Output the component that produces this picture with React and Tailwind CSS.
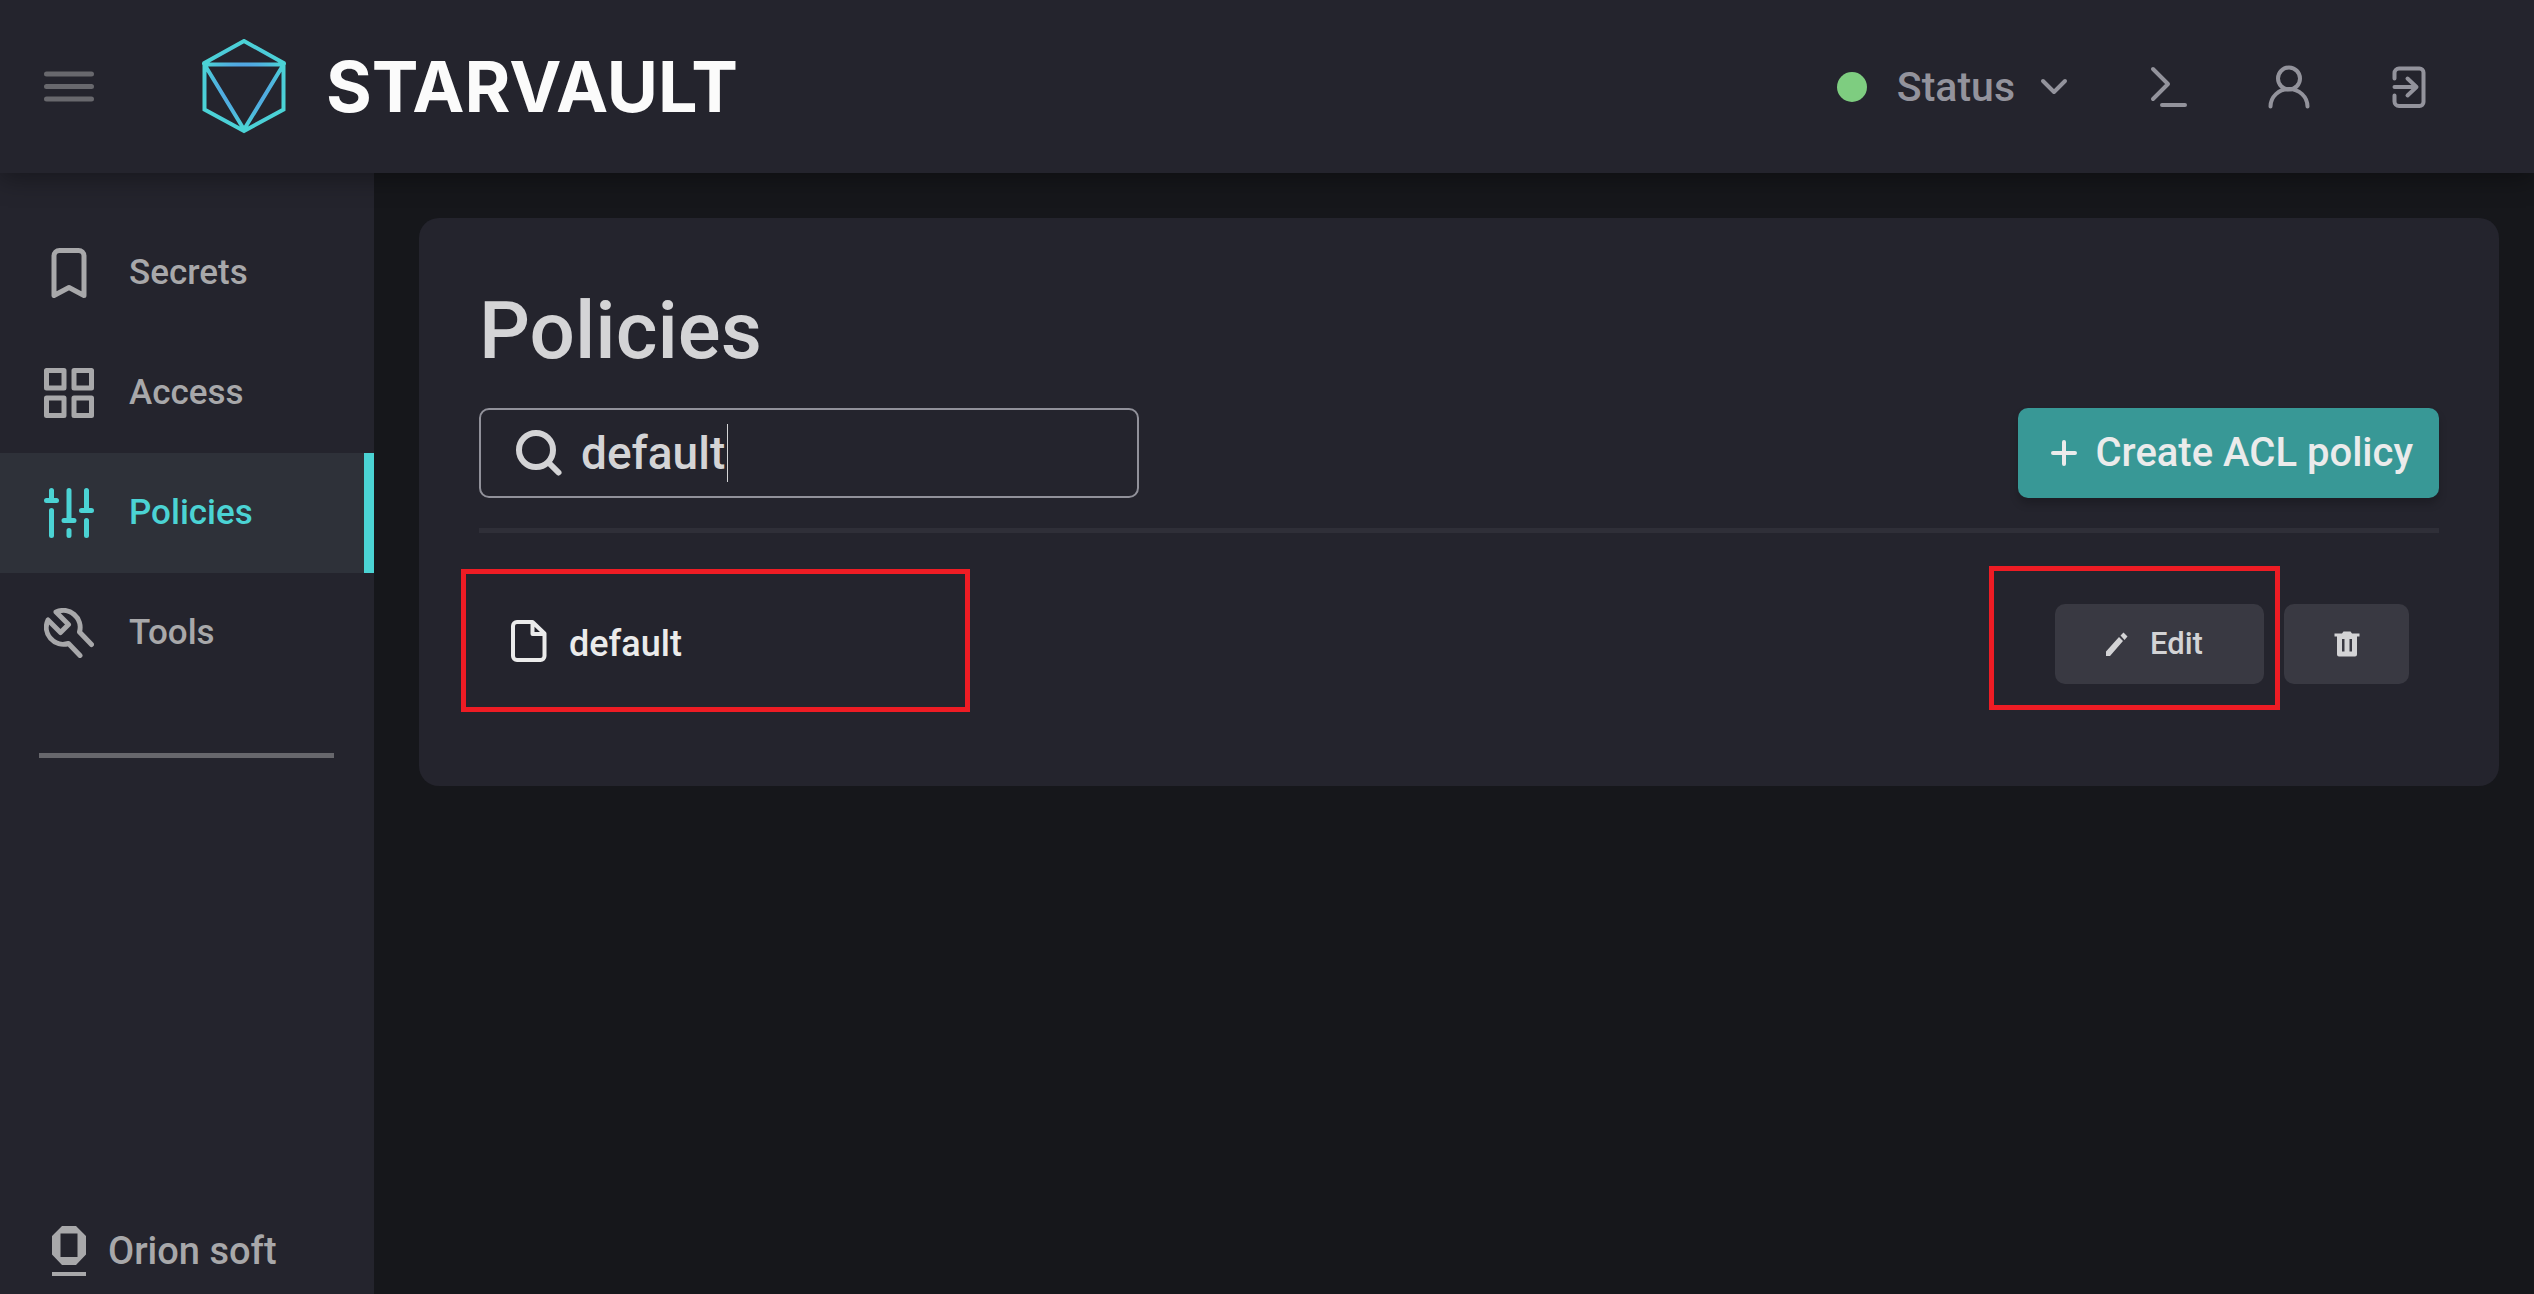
import { useState } from 'react'

const NAV_ITEMS = [
  { id: 'secrets', label: 'Secrets', Icon: BookmarkIcon },
  { id: 'access', label: 'Access', Icon: GridIcon },
  { id: 'policies', label: 'Policies', Icon: SlidersIcon },
  { id: 'tools', label: 'Tools', Icon: WrenchIcon },
]

const POLICIES = ['default']

function StrokeIcon({ box, width, className, children }) {
  return (
    <svg
      viewBox={`0 0 ${box} ${box}`}
      className={className}
      fill="none"
      stroke="currentColor"
      strokeWidth={width}
      strokeLinecap="round"
      strokeLinejoin="round"
      aria-hidden
    >
      {children}
    </svg>
  )
}

function NavIcon({ children }) {
  return <StrokeIcon box={50} width={5} className="w-[50px] h-[50px] shrink-0">{children}</StrokeIcon>
}

function HeaderIcon({ children }) {
  return <StrokeIcon box={60} width={4} className="w-15 h-15">{children}</StrokeIcon>
}

function BookmarkIcon() {
  return <NavIcon><path d="M10 47.5V8a5.5 5.5 0 0 1 5.5-5.5h19A5.5 5.5 0 0 1 40 8v39.5L25 39.5z" /></NavIcon>
}

function GridIcon() {
  return (
    <NavIcon>
      <path d="M2.5 2.5H20V20H2.5zM30 2.5h17.5V20H30zM2.5 30H20v17.5H2.5zM30 30h17.5v17.5H30z" />
    </NavIcon>
  )
}

function SlidersIcon() {
  return (
    <NavIcon>
      <path d="M7.5 2.5v10M2.5 12.5h10M7.5 22.5v25M25 2.5v30M20 32.5h10M25 42.5v5M42.5 2.5v20M37.5 22.5h10M42.5 32.5v15" />
    </NavIcon>
  )
}

function WrenchIcon() {
  return (
    <NavIcon>
      <path d="M47.5 36.5l-12-12.5A17 17 0 0 0 12 4l12.5 12.5-8 8L4 12a17 17 0 0 0 20.5 23.5l11.5 12" />
    </NavIcon>
  )
}

function LogoMark() {
  return (
    <svg viewBox="0 0 84 96" className="w-[84px] h-24" fill="none" strokeWidth="4" aria-hidden>
      <defs>
        <radialGradient id="mark" gradientUnits="userSpaceOnUse" cx="42" cy="46" r="46">
          <stop offset="0.3" stopColor="#5399e6" />
          <stop offset="0.92" stopColor="#4bd3d6" />
        </radialGradient>
      </defs>
      <path stroke="url(#mark)" d="M42 2l39.5 22v46.5L42 92 2.5 70.5V24zM2.5 25.5h79L42 90.5z" />
    </svg>
  )
}

function OrionMark() {
  return (
    <svg viewBox="0 0 34 50" className="w-[34px] h-[50px]" fill="currentColor" aria-hidden>
      <path fillRule="evenodd" d="M10 0h14l10 10v18.5L24 39H10L0 28.5V10zM8.5 7.5V31h17V7.5z" />
      <path d="M0 46h34v4H0z" />
    </svg>
  )
}

function Header() {
  return (
    <header className="relative z-10 flex items-center h-[173px] pl-11 pr-[95px] bg-[#24242d] shadow-[0_6px_24px_rgba(0,0,0,0.35)]">
      <button type="button" aria-label="Toggle menu" className="text-[#68686d]">
        <StrokeIcon box={50} width={5} className="w-[50px] h-[50px]">
          <path d="M2.5 12h45M2.5 24.5h45M2.5 37h45" />
        </StrokeIcon>
      </button>
      <a href="#home" className="flex items-center gap-10 ml-[108px] text-[#fbfbfb]">
        <LogoMark />
        <span className="font-['Inter',sans-serif] font-bold text-[70px] leading-none">STARVAULT</span>
      </a>

      <div className="flex items-center ml-auto text-[#93939c]">
        <button type="button" className="flex items-center mr-[70px]">
          <span className="w-[30px] h-[30px] rounded-full bg-[#7ecd80]" />
          <span className="ml-[30px] text-[41px] leading-12 font-medium">Status</span>
          <svg viewBox="0 0 30 20" className="w-[30px] h-5 ml-6" fill="none" stroke="currentColor" strokeWidth="4" strokeLinecap="round" strokeLinejoin="round" aria-hidden>
            <path d="M4 4l11 11L26 4" />
          </svg>
        </button>
        <div className="flex gap-15">
          <button type="button" aria-label="Console">
            <HeaderIcon><path d="M14 12l15 15-15 15M23 48h23" /></HeaderIcon>
          </button>
          <button type="button" aria-label="Account">
            <HeaderIcon>
              <circle cx="30" cy="21.5" r="11" />
              <path d="M11.5 49.5a18.5 17.5 0 0 1 37 0" />
            </HeaderIcon>
          </button>
          <button type="button" aria-label="Log out">
            <HeaderIcon>
              <path d="M15.5 21.5V16a4.5 4.5 0 0 1 4.5-4.5h20.5a4 4 0 0 1 4 4V45a4 4 0 0 1-4 4H20a4.5 4.5 0 0 1-4.5-4.5V38.5M15.5 30H37M28.5 21.5L37.5 30l-9 8.5" />
            </HeaderIcon>
          </button>
        </div>
      </div>
    </header>
  )
}

function Sidebar({ active, onSelect }) {
  return (
    <aside className="flex flex-col w-[374px] shrink-0 pt-10 bg-[#24242d] text-[#a8a8aa]">
      <nav>
        {NAV_ITEMS.map(({ id, label, Icon }) => (
          <a
            key={id}
            href={`#${id}`}
            onClick={() => onSelect(id)}
            className={`flex items-center gap-[35px] h-30 pl-11 text-[35px] font-medium border-r-10 ${
              id === active ? 'bg-[#2e3139] border-[#4bd3d4] text-[#4bd3d4]' : 'border-transparent'
            }`}
          >
            <Icon />
            {label}
          </a>
        ))}
      </nav>
      <hr className="mt-15 ml-[39px] mr-10 border-t-5 border-[#67676c]" />
      <a href="#orion" className="flex items-center gap-[22px] mt-auto mb-[18px] pl-[52px] text-[38px] leading-[50px] font-medium">
        <OrionMark />
        Orion soft
      </a>
    </aside>
  )
}

function PolicyRow({ name }) {
  return (
    <li className="flex items-center justify-between h-20 pl-8 pr-[30px]">
      <div className="relative">
        <a href={`#policy-${name}`} className="flex items-center gap-[22px] text-[36px] leading-12 font-medium text-[#ebebeb]">
          <svg viewBox="0 0 36 48" className="w-9 h-12" fill="none" stroke="currentColor" strokeWidth="4" strokeLinejoin="round" aria-hidden>
            <path d="M6 2h15.5L33.5 13.5V36a4 4 0 0 1-4 4H6a4 4 0 0 1-4-4V6a4 4 0 0 1 4-4zM21.5 2v12H33" />
          </svg>
          {name}
        </a>
        {/* highlight */}
        <span className="absolute -left-[50px] -top-[51px] w-[509px] h-[143px] border-5 border-[#ee1c24] pointer-events-none" />
      </div>
      <div className="flex gap-5 text-[#d3d3d5]">
        <div className="relative">
          <button type="button" className="flex items-center gap-[22px] w-[209px] h-20 pl-[51px] rounded-[10px] bg-[#393942] text-[31px] font-medium">
            <svg viewBox="0 0 22 24" className="w-[22px] h-6" fill="currentColor" aria-hidden>
              <path d="M0 24v-4.5L13 5l4 4L4 24zM14.5 3.5L17.5 0.5l4 4-3 3.5z" />
            </svg>
            Edit
          </button>
          <span className="absolute -left-[66px] -top-[38px] w-[291px] h-36 border-5 border-[#ee1c24] pointer-events-none" />
        </div>
        <button type="button" aria-label="Delete" className="flex items-center justify-center w-[125px] h-20 rounded-[10px] bg-[#393942]">
          <svg viewBox="0 0 26 26" className="w-[26px] h-[26px]" fill="currentColor" aria-hidden>
            <path fillRule="evenodd" d="M0.5 2.5H8L9.5 0.5h7L18 2.5h7.5V5.5H23V23.5a2 2 0 0 1-2 2H5a2 2 0 0 1-2-2V5.5H0.5zM8 8v12.5h2.5V8zM15.5 8v12.5H18V8z" />
          </svg>
        </button>
      </div>
    </li>
  )
}

export default function App() {
  const [section, setSection] = useState('policies')
  const [filter, setFilter] = useState('default')
  const visible = POLICIES.filter(name => name.includes(filter))

  return (
    <div className="flex flex-col min-h-screen bg-[#16171b] font-['Roboto',sans-serif]">
      <Header />
      <div className="flex grow">
        <Sidebar active={section} onSelect={setSection} />
        <main className="grow pt-[45px] pl-[45px] pr-[35px]">
          <section className="px-15 pt-[73px] pb-[102px] rounded-[20px] bg-[#24242d]">
            <h1 className="text-[80px] leading-20 font-medium text-[#d4d4d6]">Policies</h1>
            <div className="flex items-center justify-between mt-[37px]">
              <label className="relative flex items-center gap-[18px] w-[660px] h-[90px] pl-[34px] border-2 border-[#91919a] rounded-[10px] text-[#d4d4d6]">
                <StrokeIcon box={48} width={6} className="w-12 h-12 shrink-0">
                  <circle cx="21" cy="21" r="17" />
                  <path d="M33.5 33.5l10 10" />
                </StrokeIcon>
                <input
                  aria-label="Filter policies"
                  value={filter}
                  onChange={e => setFilter(e.target.value)}
                  className="grow min-w-0 text-[46px] leading-[58px] font-medium outline-none"
                />
                <span className="absolute left-[246px] w-px h-[58px] bg-[#d4d4d6]" />
              </label>
              <button type="button" className="flex items-center gap-[18px] h-[90px] pl-8 pr-[26px] rounded-[10px] bg-[#389896] text-[#ebebeb] text-[40px] font-medium shadow-[0_6px_8px_rgba(0,0,0,0.2)]">
                <StrokeIcon box={28} width={4} className="w-7 h-7">
                  <path d="M14 3v22M3 14h22" />
                </StrokeIcon>
                Create ACL policy
              </button>
            </div>
            <hr className="mt-[30px] border-t-5 border-[#2f2f38]" />
            <ul className="mt-[71px]">
              {visible.map(name => <PolicyRow key={name} name={name} />)}
            </ul>
          </section>
        </main>
      </div>
    </div>
  )
}
